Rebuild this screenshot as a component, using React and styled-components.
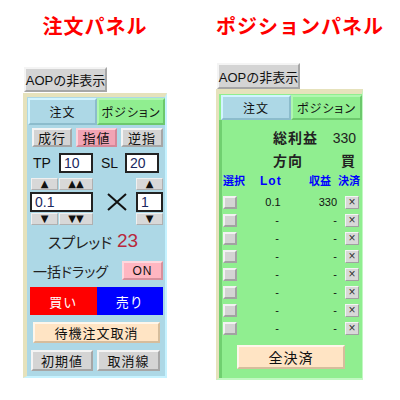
import React from 'react';
import styled, { createGlobalStyle, css } from 'styled-components';

const GlobalStyle = createGlobalStyle`
  body {
    margin: 0;
    background: #fff;
    font-family: "Liberation Sans", "Noto Sans CJK JP", sans-serif;
  }
  * { box-sizing: border-box; }
`;

const bevel = (face, light, dark, w = 2) => css`
  background: ${face};
  border-style: solid;
  border-width: ${w}px;
  border-color: ${light} ${dark} ${dark} ${light};
`;

const GREY = ['#d4d4d4', '#f4f4f4', '#a6a6a6'];
const BISQUE = ['#ffe4c4', '#fff6ea', '#d6bd9c'];

const Page = styled.div`
  display: flex;
  align-items: flex-start;
  gap: 49px;
  width: 400px;
  height: 400px;
  padding: 14px 0 0 23px;
`;

const Column = styled.div`
  width: ${p => p.$width}px;
  display: flex;
  flex-direction: column;
  align-items: flex-start;
`;

const Title = styled.div`
  align-self: stretch;
  text-align: center;
  color: #ff0000;
  font-family: "Noto Sans CJK JP", sans-serif;
  font-size: 20px;
  font-weight: 700;
  line-height: 24px;
  letter-spacing: 1px;
  white-space: nowrap;
`;

const Button = styled.button`
  margin: 0;
  padding: 0;
  font-family: inherit;
  color: #111;
  display: flex;
  align-items: center;
  justify-content: center;
  white-space: nowrap;
  cursor: pointer;
`;

const AopButton = styled(Button)`
  margin: ${p => p.$top}px 0 0 1px;
  width: 83px;
  height: ${p => p.$height}px;
  font-size: 13px;
  ${bevel(...GREY)}
`;

const Panel = styled.div`
  margin-top: ${p => p.$top}px;
  width: ${p => p.$width}px;
  background: ${p => p.$bg};
  border-style: solid;
  border-color: #e6e2bc ${p => p.$edge} ${p => p.$edge} #e6e2bc;
  border-width: ${p => p.$bt}px ${p => p.$br}px 2px ${p => p.$bl}px;
`;

const TabRow = styled.div`
  display: flex;
  padding: 1px 0 0 ${p => p.$left}px;
`;

const Tab = styled.div`
  width: ${p => p.$w}px;
  height: ${p => p.$h}px;
  display: flex;
  align-items: center;
  justify-content: center;
  font-size: 12px;
  font-feature-settings: "palt";
  letter-spacing: 1px;
  white-space: nowrap;
  color: #111;
  ${p => (p.$kind === 'order'
    ? bevel('#add8e6', '#d2f4ff', '#8cbccc')
    : bevel('#90ee90', '#b0f6b0', '#6cc86c'))}
`;

/* ---------- order panel ---------- */

const OrderBody = styled.div`
  display: flex;
  flex-direction: column;
  padding: 0 2px 5px 3px;
`;

const Row = styled.div`
  display: flex;
  align-items: center;
  margin-top: ${p => p.$top}px;
  height: ${p => p.$h}px;
`;

const TypeButton = styled(Button)`
  width: ${p => p.$w}px;
  height: 19px;
  font-size: 13px;
  letter-spacing: 1px;
  margin-left: ${p => p.$ml || 0}px;
  ${p => (p.$active ? bevel('#f2a4b4', '#fbd2da', '#d48898') : bevel(...GREY))}
`;

const FieldLabel = styled.span`
  width: ${p => p.$w}px;
  margin-left: ${p => p.$ml}px;
  font-size: 14px;
  color: #111;
`;

const NumberBox = styled.input`
  width: ${p => p.$w}px;
  height: 20px;
  margin: 0;
  padding: 0 0 0 3px;
  border: 2px solid #222;
  background: #fff;
  font-family: "Liberation Sans", sans-serif;
  font-size: 14px;
  color: #1a2860;
  outline: none;
`;

const Spinner = styled.div`
  display: flex;
  flex-direction: column;
  gap: 1px;
  width: ${p => p.$w}px;
  margin-left: ${p => p.$ml}px;
`;

const ArrowRow = styled.div`
  display: flex;
  gap: 1px;
  padding-left: ${p => p.$pl || 0}px;
  margin-bottom: ${p => p.$mb || 0}px;
`;

const ArrowButton = styled(Button)`
  width: ${p => p.$w}px;
  height: 12px;
  font-family: "DejaVu Sans", sans-serif;
  font-size: 10px;
  line-height: 1;
  color: #111;
  ${bevel('#d8d8d8', '#f0f0f0', '#b0b0b0', 1)}
`;

const Times = styled.svg`
  margin-left: 14px;
  flex: none;
`;

const SpreadLabel = styled.span`
  width: 69px;
  margin-left: 18px;
  font-family: "Noto Sans CJK JP", sans-serif;
  font-feature-settings: "palt";
  font-size: 15px;
  color: #222;
`;

const SpreadValue = styled.span`
  font-size: 19px;
  color: #b8283c;
`;

const DragLabel = styled.span`
  margin-left: 3px;
  font-family: "Noto Sans CJK JP", sans-serif;
  font-feature-settings: "palt";
  font-size: 14px;
  color: #222;
`;

const OnButton = styled(Button)`
  margin-left: auto;
  width: 41px;
  height: 19px;
  font-size: 12px;
  letter-spacing: 1px;
  ${bevel('#ffb6c1', '#ffd8de', '#d8909c')}
`;

const SideButton = styled(Button)`
  flex: 1;
  height: 28px;
  border: none;
  color: #fff;
  font-size: 13px;
  letter-spacing: 1px;
  background: ${p => p.$bg};
`;

const WideButton = styled(Button)`
  width: ${p => p.$w}px;
  height: ${p => p.$h}px;
  margin-left: ${p => p.$ml || 0}px;
  font-size: ${p => p.$fs || 13}px;
  letter-spacing: 1px;
  ${p => (p.$bisque ? bevel(...BISQUE) : bevel(...GREY))}
`;

/* ---------- position panel ---------- */

const PositionBody = styled.div`
  display: flex;
  flex-direction: column;
  border-left: 3px solid #70d070;
  padding: 0 0 9px 0;
`;

const SummaryRow = styled.div`
  display: flex;
  justify-content: space-between;
  margin-top: ${p => p.$top}px;
  padding: 0 6px 0 51px;
  line-height: 18px;
  font-size: 14px;
  color: #222;
`;

const SummaryLabel = styled.span`
  font-weight: 700;
  letter-spacing: 1px;
`;

const HeaderGrid = styled.div`
  display: grid;
  grid-template-columns: 37px 49px 29px 22px;
  margin-top: 4px;
  padding-left: 1px;
  line-height: 14px;
  font-size: 11px;
  font-weight: 700;
  color: #0000ff;
  white-space: nowrap;
`;

const LotHead = styled.span`
  font-size: 12px;
  letter-spacing: 1px;
`;

const PositionList = styled.div`
  display: flex;
  flex-direction: column;
  margin-top: 5px;
  padding-left: 1px;
`;

const PositionRow = styled.div`
  display: grid;
  grid-template-columns: 14px 72px 30px 20px;
  align-items: center;
  height: 18px;
  font-size: 11px;
  color: #111;
`;

const SelectBox = styled.div`
  width: 14px;
  height: 13px;
  ${bevel('#d4d4d4', '#f2f2f2', '#a2a2a2')}
`;

const LotCell = styled.span`
  text-align: center;
  padding-left: ${p => (p.$dash ? 8 : 0)}px;
`;

const ProfitCell = styled.span`
  text-align: right;
  padding-right: 2px;
`;

const CloseBox = styled(Button)`
  justify-self: end;
  width: 14px;
  height: 13px;
  font-size: 12px;
  line-height: 1;
  color: #333;
  ${bevel('#d8d8d8', '#f4f4f4', '#a0a0a0', 1)}
`;

const positions = [
  { lot: '0.1', profit: '330' },
  ...Array.from({ length: 7 }, () => ({ lot: '-', profit: '-' })),
];

function OrderPanel() {
  return (
    <Column $width={144}>
      <Title>注文パネル</Title>
      <AopButton $top={29} $height={25}>AOPの非表示</AopButton>
      <Panel $top={1} $width={144} $bg="#add8e6" $edge="#c6f2ff" $bt={4} $bl={4} $br={2}>
        <TabRow $left={1}>
          <Tab $kind="order" $w={69} $h={27}>注文</Tab>
          <Tab $kind="position" $w={68} $h={27}>ポジション</Tab>
        </TabRow>
        <OrderBody>
          <Row $top={3} $h={19}>
            <TypeButton $w={40} $ml={2}>成行</TypeButton>
            <TypeButton $w={41} $ml={4} $active>指値</TypeButton>
            <TypeButton $w={42} $ml={4}>逆指</TypeButton>
          </Row>
          <Row $top={6} $h={20}>
            <FieldLabel $w={26} $ml={3}>TP</FieldLabel>
            <NumberBox $w={34} defaultValue="10" />
            <FieldLabel $w={24} $ml={8}>SL</FieldLabel>
            <NumberBox $w={34} defaultValue="20" />
          </Row>
          <Row $top={5} $h={47}>
            <Spinner $w={63} $ml={0}>
              <ArrowRow $pl={1} $mb={1}>
                <ArrowButton $w={27}>▲</ArrowButton>
                <ArrowButton $w={34}>▲▲</ArrowButton>
              </ArrowRow>
              <NumberBox $w={63} defaultValue="0.1" />
              <ArrowRow $pl={1}>
                <ArrowButton $w={27}>▼</ArrowButton>
                <ArrowButton $w={34}>▼▼</ArrowButton>
              </ArrowRow>
            </Spinner>
            <Times width="20" height="18" viewBox="0 0 20 18">
              <path d="M1 1 L19 17 M19 1 L1 17" stroke="#111" strokeWidth="2" fill="none" />
            </Times>
            <Spinner $w={27} $ml={9}>
              <ArrowRow $mb={1}>
                <ArrowButton $w={27}>▲</ArrowButton>
              </ArrowRow>
              <NumberBox $w={27} defaultValue="1" />
              <ArrowRow>
                <ArrowButton $w={27}>▼</ArrowButton>
              </ArrowRow>
            </Spinner>
          </Row>
          <Row $top={6} $h={20}>
            <SpreadLabel>スプレッド</SpreadLabel>
            <SpreadValue>23</SpreadValue>
          </Row>
          <Row $top={10} $h={19}>
            <DragLabel>一括ドラッグ</DragLabel>
            <OnButton>ON</OnButton>
          </Row>
          <Row $top={7} $h={28}>
            <SideButton $bg="#ff0000">買い</SideButton>
            <SideButton $bg="#0000ff">売り</SideButton>
          </Row>
          <Row $top={7} $h={21}>
            <WideButton $w={127} $h={21} $ml={3} $bisque>待機注文取消</WideButton>
          </Row>
          <Row $top={7} $h={21}>
            <WideButton $w={62} $h={21} $ml={1}>初期値</WideButton>
            <WideButton $w={63} $h={21} $ml={4}>取消線</WideButton>
          </Row>
        </OrderBody>
      </Panel>
    </Column>
  );
}

function PositionPanel() {
  return (
    <Column $width={147}>
      <Title>ポジションパネル</Title>
      <AopButton $top={25} $height={26}>AOPの非表示</AopButton>
      <Panel $top={0} $width={147} $bg="#90ee90" $edge="#c2f8c2" $bt={5} $bl={3} $br={1}>
        <TabRow $left={2}>
          <Tab $kind="order" $w={70} $h={25}>注文</Tab>
          <Tab $kind="position" $w={71} $h={25}>ポジション</Tab>
        </TabRow>
        <PositionBody>
          <SummaryRow $top={9}>
            <SummaryLabel>総利益</SummaryLabel>
            <span>330</span>
          </SummaryRow>
          <SummaryRow $top={5}>
            <SummaryLabel>方向</SummaryLabel>
            <SummaryLabel>買</SummaryLabel>
          </SummaryRow>
          <HeaderGrid>
            <span>選択</span>
            <LotHead>Lot</LotHead>
            <span>収益</span>
            <span>決済</span>
          </HeaderGrid>
          <PositionList>
            {positions.map((p, i) => (
              <PositionRow key={i}>
                <SelectBox />
                <LotCell $dash={p.lot === '-'}>{p.lot}</LotCell>
                <ProfitCell>{p.profit}</ProfitCell>
                <CloseBox>×</CloseBox>
              </PositionRow>
            ))}
          </PositionList>
          <Row $top={8} $h={24}>
            <WideButton $w={108} $h={24} $ml={15} $fs={14} $bisque>全決済</WideButton>
          </Row>
        </PositionBody>
      </Panel>
    </Column>
  );
}

export default function App() {
  return (
    <>
      <GlobalStyle />
      <Page>
        <OrderPanel />
        <PositionPanel />
      </Page>
    </>
  );
}
